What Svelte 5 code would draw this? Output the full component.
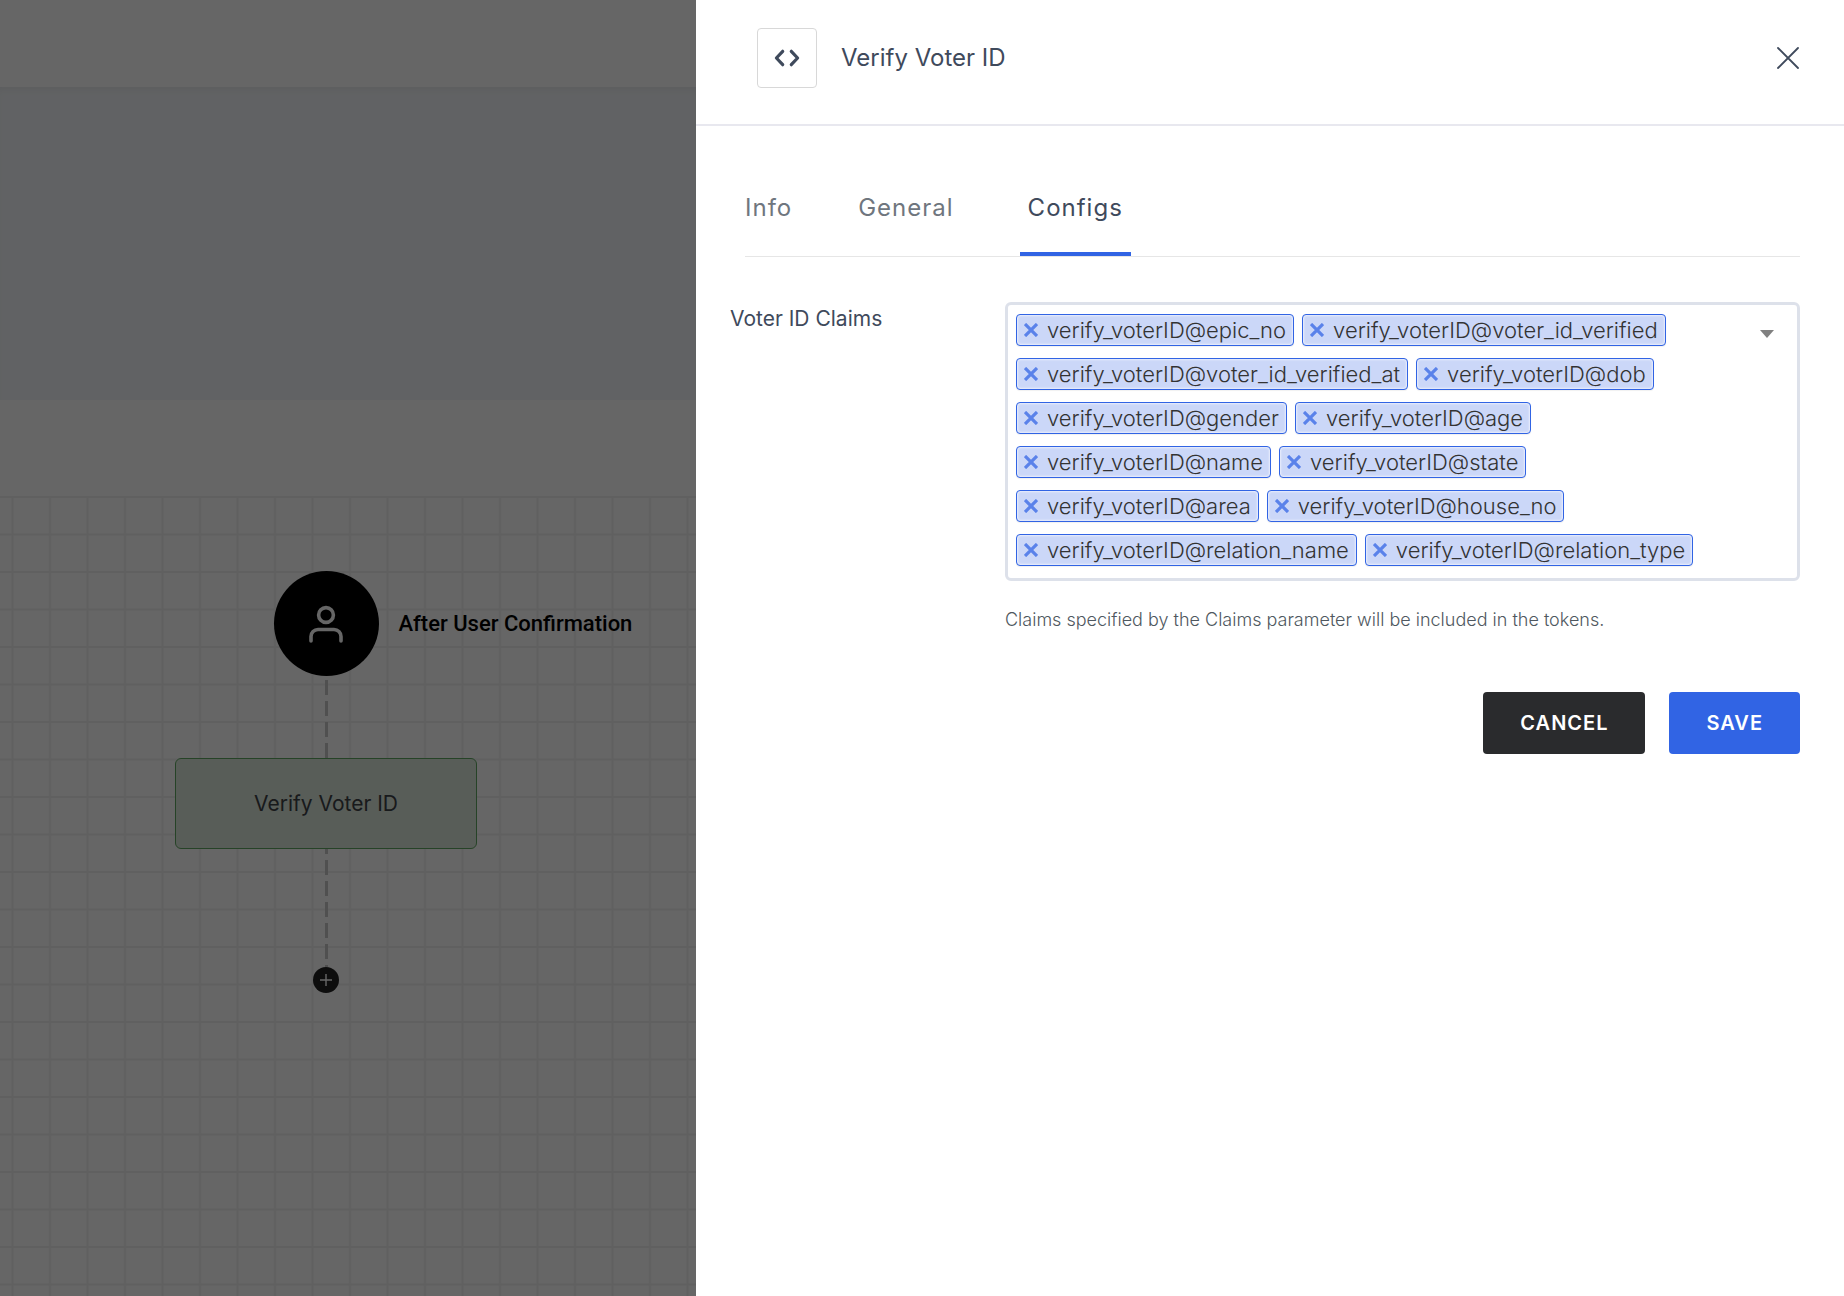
<script>
    let tabs = ["Info", "General", "Configs"];
    let activeTab = "Configs";

    let claims = [
        "verify_voterID@epic_no",
        "verify_voterID@voter_id_verified",
        "verify_voterID@voter_id_verified_at",
        "verify_voterID@dob",
        "verify_voterID@gender",
        "verify_voterID@age",
        "verify_voterID@name",
        "verify_voterID@state",
        "verify_voterID@area",
        "verify_voterID@house_no",
        "verify_voterID@relation_name",
        "verify_voterID@relation_type"
    ];

    function removeClaim(claim) {
        claims = claims.filter((c) => c !== claim);
    }
</script>

<div class="page">
    <div class="workflow">
        <div class="topbar"></div>
        <div class="banner"></div>
        <div class="toolbar"></div>
        <div class="canvas">
            <svg class="grid" aria-hidden="true">
                <defs>
                    <pattern id="cells" width="37.5" height="37.5" patternUnits="userSpaceOnUse">
                        <path d="M11.5 0h2v37.5h-2zM0 0h37.5v2H0z" fill="#f0f0f0" />
                    </pattern>
                </defs>
                <rect width="100%" height="100%" fill="url(#cells)" />
            </svg>
            <div class="flow">
                <div class="start">
                    <svg width="36" height="40" viewBox="0 0 36 40" fill="none" stroke="#fff" stroke-width="3.6" stroke-linecap="round">
                        <circle cx="18" cy="11" r="7.4" />
                        <path d="M3 37v-4.500a7 7 0 0 1 7-7h16a7 7 0 0 1 7 7V37" />
                    </svg>
                    <span class="start-label">After User Confirmation</span>
                </div>
                <div class="line"></div>
                <button class="node">Verify Voter ID</button>
                <div class="line long"></div>
                <button class="add" aria-label="Add step">
                    <svg width="12" height="12" viewBox="0 0 12 12" stroke="#fff" stroke-width="1.4"><path d="M6 0v12M0 6h12" /></svg>
                </button>
            </div>
        </div>
    </div>

    <div class="overlay"></div>

    <aside class="drawer">
        <header>
            <span class="code-icon">
                <svg width="26" height="20" viewBox="0 0 26 20" fill="none" stroke="#3f4a5c" stroke-width="3.2" stroke-linecap="round" stroke-linejoin="round">
                    <path d="M8.700 3.300L2.400 10l6.300 6.700M17.300 3.300L23.600 10l-6.300 6.700" />
                </svg>
            </span>
            <h1>Verify Voter ID</h1>
            <button class="close" aria-label="Close">
                <svg width="22" height="22" viewBox="0 0 22 22" stroke="#3f4a5c" stroke-width="1.800" stroke-linecap="round"><path d="M1 1l20 20M21 1L1 21" /></svg>
            </button>
        </header>

        <nav class="tabs">
            {#each tabs as tab}
                <button class:active={tab === activeTab} on:click={() => (activeTab = tab)}>{tab}</button>
            {/each}
        </nav>

        <form on:submit|preventDefault>
            <span class="label" id="claims-label">Voter ID Claims</span>
            <div class="field">
                <div class="select" role="group" aria-labelledby="claims-label">
                    <ul>
                        {#each claims as claim (claim)}
                            <li>
                                <button type="button" aria-label="Remove {claim}" on:click={() => removeClaim(claim)}>
                                    <svg width="14" height="14" viewBox="0 0 14 14" stroke="#5a82ea" stroke-width="3.2"><path d="M1 1l12 12M13 1L1 13" /></svg>
                                </button>
                                <span>{claim}</span>
                            </li>
                        {/each}
                    </ul>
                    <button type="button" class="arrow" aria-label="Show claims">
                        <svg width="14" height="8" viewBox="0 0 14 8" fill="#808080"><path d="M0 0h14L7 8z" /></svg>
                    </button>
                </div>
                <p>Claims specified by the Claims parameter will be included in the tokens.</p>
            </div>
            <div class="actions">
                <button type="button" class="cancel">CANCEL</button>
                <button type="submit" class="save">SAVE</button>
            </div>
        </form>
    </aside>
</div>

<style>
    :global(body) {
        margin: 0;
    }

    .page {
        position: relative;
        display: flex;
        min-height: 100vh;
        font-family: Inter, sans-serif;
        color: #3f4a5c;
    }

    button {
        padding: 0;
        border: none;
        background: none;
        font-family: inherit;
        color: inherit;
        cursor: pointer;
    }

    svg {
        display: block;
    }

    .workflow {
        display: flex;
        flex-direction: column;
        flex: 0 0 696px;
        background-color: white;
    }

    .topbar {
        height: 87px;
    }

    .banner {
        height: 313px;
        background-color: #f3f6f9;
        box-shadow: inset 0 6px 8px -4px rgba(0, 0, 0, 0.06);
    }

    .toolbar {
        height: 96px;
    }

    .canvas {
        position: relative;
        flex: 1;
        overflow: hidden;
    }

    .grid {
        position: absolute;
        width: 100%;
        height: 100%;
    }

    .flow {
        position: relative;
        display: flex;
        flex-direction: column;
        align-items: center;
        width: 302px;
        margin: 75px 0 0 175px;
    }

    .start {
        position: relative;
        display: flex;
        align-items: center;
        justify-content: center;
        width: 105px;
        height: 105px;
        border-radius: 50%;
        background-color: black;
    }

    .start-label {
        position: absolute;
        left: 100%;
        margin-left: 20px;
        white-space: nowrap;
        font-family: Roboto, sans-serif;
        font-size: 22px;
        font-weight: 500;
        color: black;
    }

    .line {
        width: 3px;
        height: 78px;
        margin-top: 4px;
        background: repeating-linear-gradient(#c8c8c8 0 15px, transparent 15px 21px);
    }

    .long {
        height: 118px;
        margin-top: 0;
        background-position: 0 -10px;
        background-size: 3px 147px;
    }

    .node {
        width: 100%;
        height: 91px;
        border: 1px solid #5fa862;
        border-radius: 6px;
        background-color: #dde8dc;
        font-size: 21px;
        color: #3c4146;
    }

    .add {
        display: flex;
        align-items: center;
        justify-content: center;
        width: 26px;
        height: 26px;
        border-radius: 50%;
        background-color: #222;
    }

    .overlay {
        position: absolute;
        inset: 0;
        background-color: rgba(0, 0, 0, 0.6);
    }

    .drawer {
        position: relative;
        flex: 1;
        background-color: white;
    }

    header {
        display: flex;
        align-items: center;
        box-sizing: border-box;
        height: 126px;
        padding: 0 45px 9px 61px;
        border-bottom: 2px solid #e8e8ef;
    }

    .code-icon {
        display: flex;
        align-items: center;
        justify-content: center;
        width: 58px;
        height: 58px;
        border: 1px solid #d8d8d8;
        border-radius: 4px;
    }

    h1 {
        flex: 1;
        margin: 0 0 0 24px;
        font-size: 24px;
        font-weight: 400;
    }

    .tabs {
        display: flex;
        gap: 58px;
        margin: 46px 44px 0 49px;
        border-bottom: 1px solid #e6e6e6;
    }

    .tabs button {
        height: 84px;
        padding: 0 8px 10px;
        border-bottom: 4px solid transparent;
        font-size: 24px;
        letter-spacing: 1px;
        color: #6f767e;
    }

    .tabs button:first-child {
        padding-left: 0;
        padding-right: 0;
    }

    .tabs .active {
        border-color: #3164e4;
        color: #3f4a5c;
    }

    form {
        display: grid;
        grid-template-columns: 275px 1fr;
        padding: 45px 44px 40px 34px;
    }

    .label {
        padding-top: 5px;
        font-size: 21px;
        line-height: 24px;
    }

    .select {
        display: flex;
        align-items: flex-start;
        justify-content: space-between;
        padding: 9px 23px 12px 8px;
        border: 3px solid #dde1ea;
        border-radius: 6px;
    }

    ul {
        display: flex;
        flex-wrap: wrap;
        flex: 1;
        gap: 12px 8px;
        margin: 0;
        padding: 0;
        list-style: none;
    }

    li {
        display: flex;
        align-items: center;
        gap: 9px;
        box-sizing: border-box;
        height: 32px;
        padding: 0 7px;
        border: 1px solid #3164e4;
        border-radius: 4px;
        background-color: #cbd7f8;
        box-shadow: inset 0 0 2px 1px rgba(255, 255, 255, 0.6), 0 1px 1px rgba(0, 0, 0, 0.06);
        font-size: 22px;
        font-weight: 300;
        line-height: 30px;
        color: #333;
    }

    .arrow {
        margin: 16px 0 0 32px;
    }

    p {
        margin: 27px 0 0;
        font-size: 18px;
        line-height: 24px;
        font-weight: 300;
        color: #4f5860;
    }

    .actions {
        grid-column: 1 / -1;
        display: flex;
        justify-content: flex-end;
        gap: 24px;
        margin-top: 60px;
    }

    .actions button {
        height: 62px;
        padding: 0 37px;
        border-radius: 4px;
        font-size: 20px;
        font-weight: 600;
        letter-spacing: 1px;
        color: white;
    }

    .actions .cancel {
        background-color: #2a2b2d;
    }

    .actions .save {
        background-color: #3164e4;
    }
</style>
